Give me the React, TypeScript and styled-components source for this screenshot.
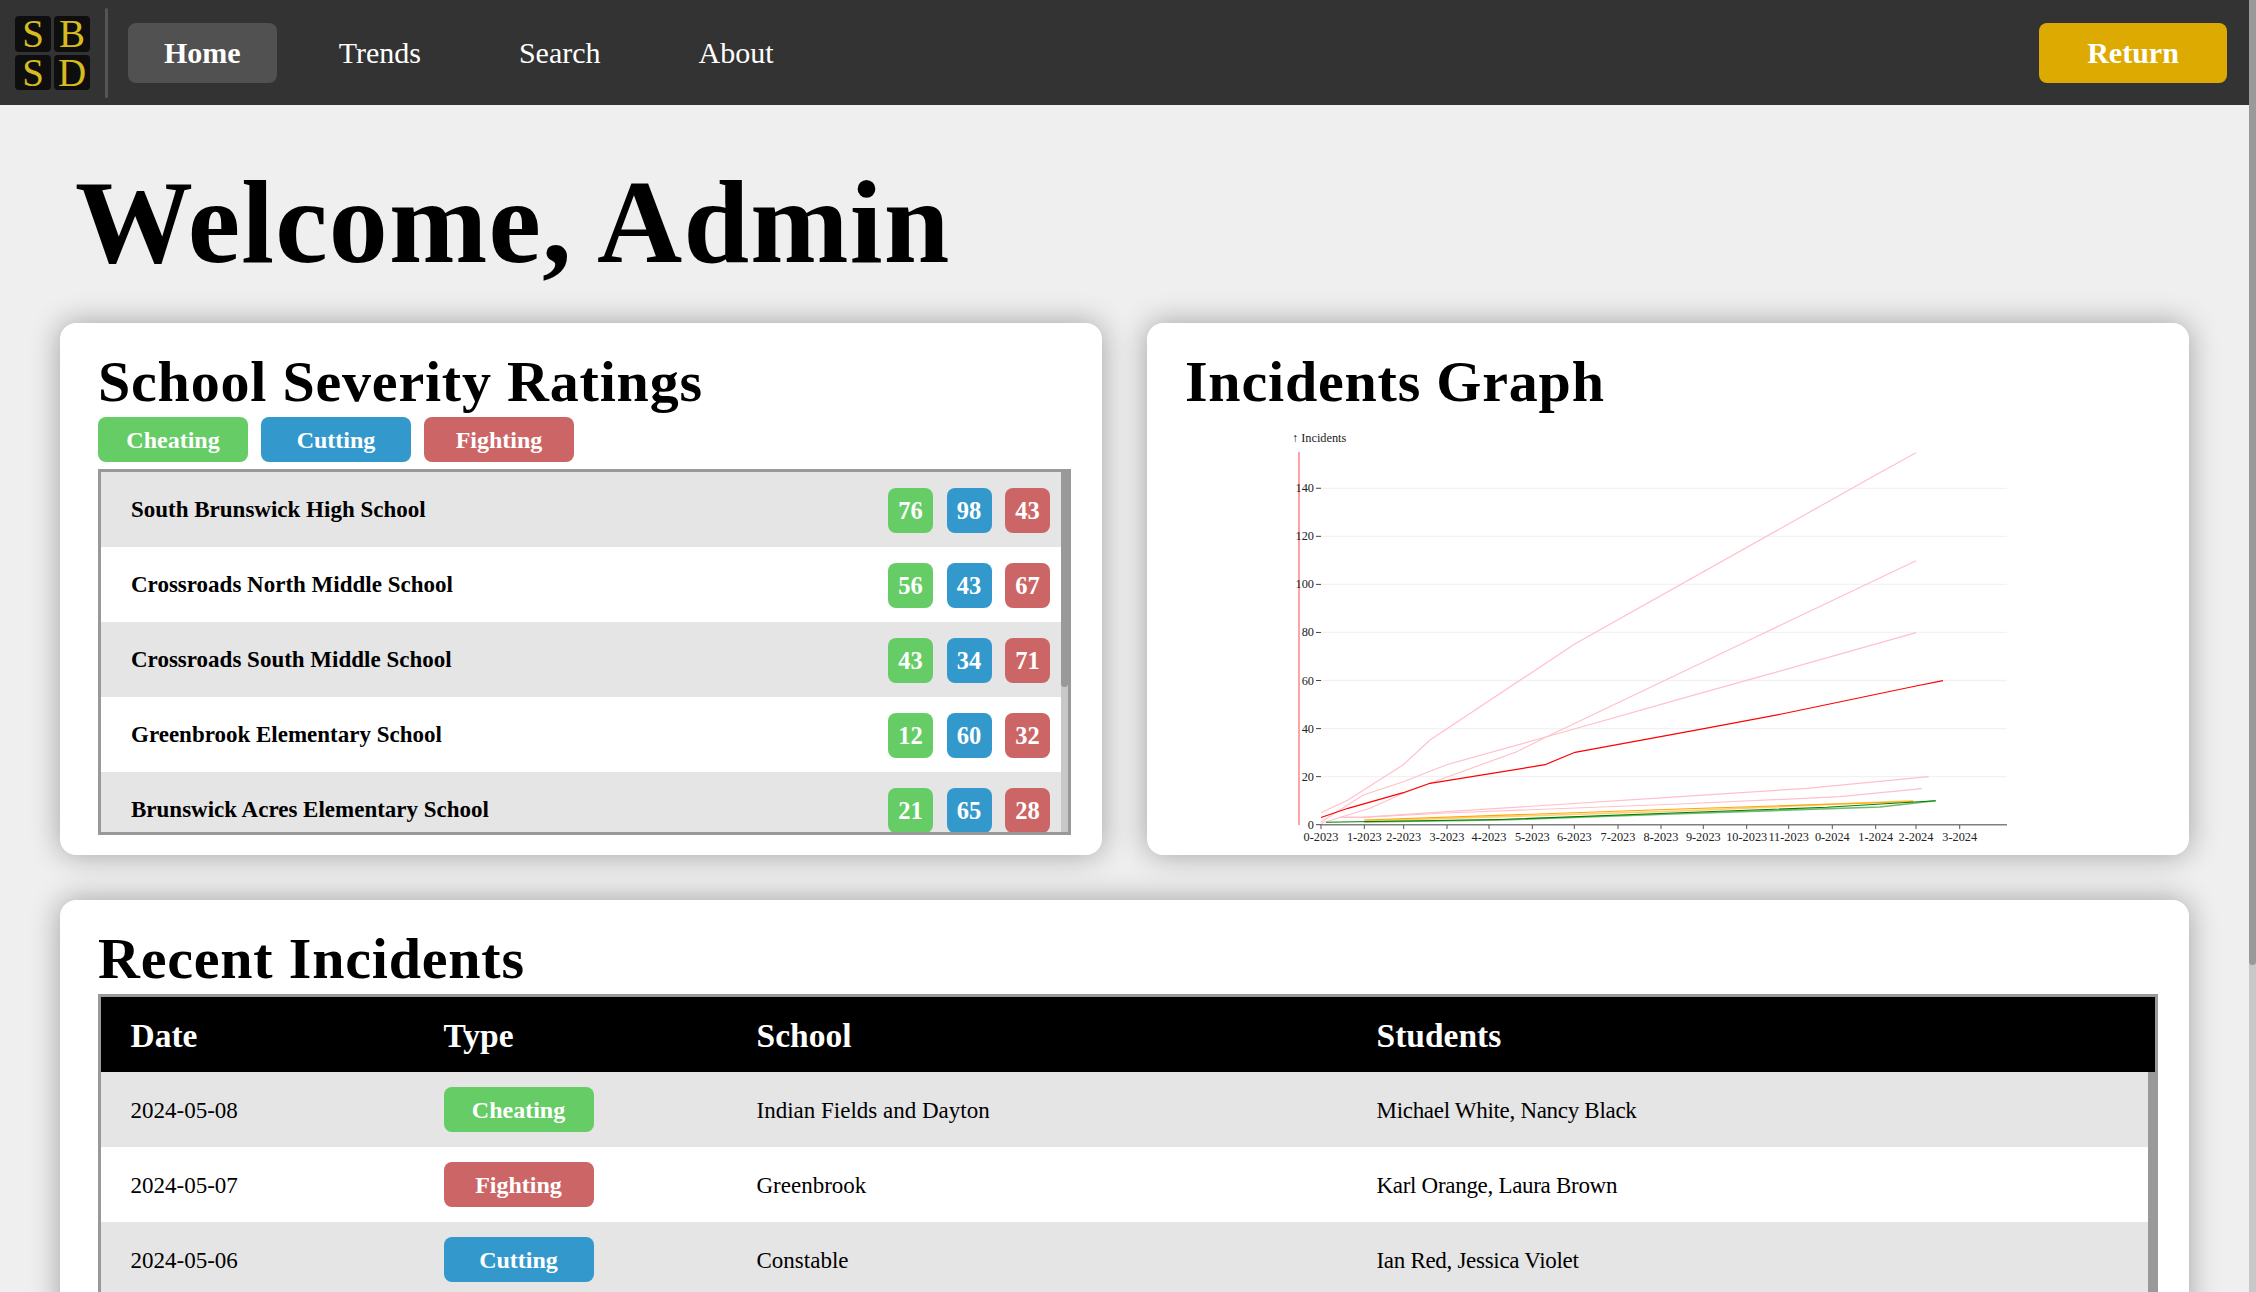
import React from 'react';
import styled, { createGlobalStyle } from 'styled-components';

type Kind = 'cheating' | 'cutting' | 'fighting';

const kindColors: Record<Kind, string> = {
  cheating: '#66cc66',
  cutting: '#3399cc',
  fighting: '#cc6666',
};

const GlobalStyle = createGlobalStyle`
  html {
    background: #efefef;
  }
  body {
    margin: 0;
    padding-right: 7px;
    background: #efefef;
    color: #000;
    font-family: "Liberation Serif", "Times New Roman", serif;
  }
`;

// the browser hides real scrollbars in the picture, so they are drawn
const PageRail = styled.div`
  position: fixed;
  top: 0;
  right: 0;
  bottom: 0;
  width: 7px;
  background: #c8c8c8;
`;

const Rail = styled.div`
  flex: none;
  width: 7px;
  background: #c8c8c8;
`;

const Thumb = styled.div<{ $height: number }>`
  height: ${(props) => props.$height}px;
  border-radius: 0 0 4px 4px;
  background: #999;
`;

const Header = styled.header`
  display: flex;
  align-items: center;
  height: 105px;
  padding: 0 22px 0 15px;
  background: #333;
`;

const Logo = styled.div`
  display: grid;
  grid-template-columns: 36px 36px;
  grid-template-rows: 36px 35px;
  gap: 3px;
`;

const LogoCell = styled.span`
  display: flex;
  align-items: center;
  justify-content: center;
  border-radius: 4px;
  background: #0e0e0e;
  color: #d6bc1f;
  font-size: 39px;
  line-height: 1;
`;

const Divider = styled.div`
  width: 3px;
  height: 90px;
  margin: 0 20px 0 15px;
  border-radius: 2px;
  background: #555;
`;

const Nav = styled.nav`
  display: flex;
  gap: 26px;
`;

const NavLink = styled.a<{ $active?: boolean }>`
  display: flex;
  align-items: center;
  height: 60px;
  padding: 0 36px;
  border-radius: 8px;
  background: ${(props) => (props.$active ? '#515151' : 'transparent')};
  color: #fff;
  font-size: 30px;
  font-weight: ${(props) => (props.$active ? 700 : 400)};
`;

const ReturnButton = styled.button`
  width: 188px;
  height: 60px;
  margin-left: auto;
  border: none;
  border-radius: 8px;
  background: #dcaa00;
  color: #fff;
  font-family: inherit;
  font-size: 30px;
  font-weight: 700;
`;

const Main = styled.main`
  padding: 0 60px 45px;
`;

const Title = styled.h1`
  margin: 59px 0 41px 15px;
  font-size: 118px;
  line-height: 118px;
  font-weight: 700;
  letter-spacing: 1.2px;
`;

const TopGrid = styled.div`
  display: grid;
  grid-template-columns: 1fr 1fr;
  gap: 45px;
  margin-bottom: 45px;
`;

const Card = styled.section`
  display: flex;
  flex-direction: column;
  padding: 30px 31px 20px 38px;
  border-radius: 16px;
  background: #fff;
  box-shadow: 0 0 30px rgba(0, 0, 0, 0.33);
`;

const CardTitle = styled.h2`
  margin: 0 0 6px;
  font-size: 58px;
  line-height: 58px;
  font-weight: 700;
  letter-spacing: 0.8px;
`;

const Legend = styled.div`
  display: flex;
  gap: 13px;
  margin-bottom: 7px;
`;

const Pill = styled.span<{ $kind: Kind }>`
  display: flex;
  align-items: center;
  justify-content: center;
  box-sizing: border-box;
  width: 150px;
  height: 45px;
  padding-top: 2px;
  border-radius: 8px;
  background: ${(props) => kindColors[props.$kind]};
  color: #fff;
  font-size: 24px;
  font-weight: 700;
`;

const Frame = styled.div`
  border: 3px solid #999;
`;

const ScrollArea = styled.div<{ $height: number }>`
  display: flex;
  height: ${(props) => props.$height}px;
`;

const Rows = styled.div`
  flex: 1;
  overflow: hidden;
`;

const SchoolRow = styled.div`
  display: flex;
  align-items: center;
  justify-content: space-between;
  height: 75px;
  padding: 0 11px 0 30px;
  font-size: 23px;
  font-weight: 700;
  &:nth-child(odd) {
    background: #e5e5e5;
  }
  &:nth-child(even) {
    background: #fff;
  }
`;

const Scores = styled.div`
  display: flex;
  gap: 13.5px;
  margin-top: 2px;
`;

const Score = styled.span<{ $kind: Kind }>`
  display: flex;
  align-items: center;
  justify-content: center;
  width: 45px;
  height: 45px;
  border-radius: 8px;
  background: ${(props) => kindColors[props.$kind]};
  color: #fff;
  font-size: 24.5px;
`;

const Chart = styled.svg`
  display: block;
  width: 766px;
  height: 418px;
  margin-left: 100px;
  overflow: visible;
  font-family: "Liberation Serif", serif;
`;

const TableColumns = styled.div`
  display: grid;
  grid-template-columns: 313px 313px 620px 1fr;
  align-items: center;
  height: 75px;
  padding-left: 29.5px;
`;

const TableHead = styled(TableColumns)`
  background: #000;
  color: #fff;
  font-size: 33.5px;
  font-weight: 700;
  line-height: 37px;
  padding-top: 1px;
  height: 74px;
`;

const IncidentRow = styled(TableColumns)`
  font-size: 23px;
  &:nth-child(odd) {
    background: #e5e5e5;
  }
  &:nth-child(even) {
    background: #fff;
  }
`;

const CellText = styled.span<{ $tight?: boolean }>`
  padding-top: 2px;
  letter-spacing: ${(props) => (props.$tight ? '-0.3px' : 'normal')};
`;

const schools = [
  { name: 'South Brunswick High School', scores: [76, 98, 43] },
  { name: 'Crossroads North Middle School', scores: [56, 43, 67] },
  { name: 'Crossroads South Middle School', scores: [43, 34, 71] },
  { name: 'Greenbrook Elementary School', scores: [12, 60, 32] },
  { name: 'Brunswick Acres Elementary School', scores: [21, 65, 28] },
  { name: 'Cambridge Elementary School', scores: [18, 22, 15] },
  { name: 'Constable Elementary School', scores: [30, 14, 26] },
  { name: 'Indian Fields Elementary School', scores: [9, 27, 19] },
];

const incidents: { date: string; type: Kind; school: string; students: string }[] = [
  { date: '2024-05-08', type: 'cheating', school: 'Indian Fields and Dayton', students: 'Michael White, Nancy Black' },
  { date: '2024-05-07', type: 'fighting', school: 'Greenbrook', students: 'Karl Orange, Laura Brown' },
  { date: '2024-05-06', type: 'cutting', school: 'Constable', students: 'Ian Red, Jessica Violet' },
  { date: '2024-05-05', type: 'cheating', school: 'Crossroads North', students: 'Grace Blue, Henry Green' },
  { date: '2024-05-04', type: 'fighting', school: 'Crossroads South', students: 'Emma Gray, Frank Pink' },
  { date: '2024-05-03', type: 'cutting', school: 'Brunswick Acres', students: 'Carol Gold, David Silver' },
  { date: '2024-05-02', type: 'cheating', school: 'South Brunswick', students: 'Alice Tan, Bob Teal' },
  { date: '2024-05-01', type: 'fighting', school: 'Cambridge', students: 'Owen Hart, Paula Reed' },
];

const labels: Record<Kind, string> = { cheating: 'Cheating', cutting: 'Cutting', fighting: 'Fighting' };
const kinds: Kind[] = ['cheating', 'cutting', 'fighting'];

const xTicks: [number, string][] = [
  [1321, '0-2023'], [1364.3, '1-2023'], [1403.7, '2-2023'], [1447, '3-2023'], [1489, '4-2023'],
  [1532.3, '5-2023'], [1574.3, '6-2023'], [1618, '7-2023'], [1661, '8-2023'], [1703.3, '9-2023'],
  [1746.7, '10-2023'], [1788.7, '11-2023'], [1832.3, '0-2024'], [1875.7, '1-2024'], [1916, '2-2024'], [1959.7, '3-2024'],
];
const yTicks = [0, 20, 40, 60, 80, 100, 120, 140];
const yScale = (value: number) => 824.7 - value * 2.403;

const pinkLines = [
  '1321,812.7 1348,800 1403.3,764.7 1430,740 1574.3,644.3 1875.7,475 1916,452.7',
  '1321,823.3 1370,808.3 1403.3,793.3 1430,783.3 1516.7,751.7 1546.7,736.7 1760,635 1916,560.7',
  '1321,822 1363.3,795 1403.3,781.7 1446.7,764.7 1553,735 1700,693.3 1760,676.7 1916,632.7',
  '1340,817.3 1361.7,817.3 1446.7,811.7 1680,796.7 1806.7,788.3 1928.7,776.7',
  '1340,817.3 1361.7,817.3 1446.7,813 1680,804 1840,796.7 1921.7,788.7',
];

const IncidentsChart: React.FC = () => (
  <Chart viewBox="1285 417 766 418">
    <line x1={1299} x2={1299} y1={452} y2={825} stroke="#ff9a9a" strokeWidth={1.8} />
    {yTicks.map((tick) => (
      <g key={tick}>
        {tick > 0 && <line x1={1321} x2={2007} y1={yScale(tick)} y2={yScale(tick)} stroke="#f2f2f2" strokeWidth={1.3} />}
        <line x1={1316} x2={1321} y1={yScale(tick)} y2={yScale(tick)} stroke="#444" />
        <text x={1314} y={yScale(tick) + 4} fontSize={12.3} textAnchor="end" fill="#222">{tick}</text>
      </g>
    ))}
    {pinkLines.map((points) => (
      <polyline key={points} points={points} fill="none" stroke="#ffc0cb" strokeWidth={1.2} />
    ))}
    <polyline points="1364.3,821 1680,811 1913.3,800.7" fill="none" stroke="#ffa500" strokeOpacity={0.55} strokeWidth={1.6} />
    <polyline points="1364.3,820 1680,809 1913.3,801.5" fill="none" stroke="#ffa500" strokeWidth={1.1} />
    <polyline points="1364.3,822 1500,820 1680,813.7 1880,807 1935.7,800.7" fill="none" stroke="#008000" strokeOpacity={0.55} strokeWidth={1.6} />
    <polyline points="1326,822.3 1500,819.5 1680,812.7 1826.7,807.3 1935.7,800.7" fill="none" stroke="#008000" strokeWidth={1.1} />
    <polyline
      points="1321,817.5 1348,808.3 1403.3,792.7 1430,783.3 1545,764.7 1575,752.3 1700,729.3 1781.7,714 1916,686 1943,680.7"
      fill="none"
      stroke="#ff0000"
      strokeWidth={1.2}
    />
    <line x1={1321} x2={2007} y1={824.7} y2={824.7} stroke="#808080" strokeWidth={1.4} />
    {xTicks.map(([x, label]) => (
      <g key={label}>
        <line x1={x} x2={x} y1={825} y2={829} stroke="#555" />
        <text x={x} y={841} fontSize={12.3} textAnchor="middle" fill="#222">{label}</text>
      </g>
    ))}
    <text x={1292} y={442} fontSize={12.3} fill="#222">↑ Incidents</text>
  </Chart>
);

const App: React.FC = () => (
  <>
    <GlobalStyle />
    <PageRail>
      <Thumb $height={965} />
    </PageRail>
    <Header>
      <Logo>
        {['S', 'B', 'S', 'D'].map((letter, index) => (
          <LogoCell key={index}>{letter}</LogoCell>
        ))}
      </Logo>
      <Divider />
      <Nav>
        <NavLink $active>Home</NavLink>
        <NavLink>Trends</NavLink>
        <NavLink>Search</NavLink>
        <NavLink>About</NavLink>
      </Nav>
      <ReturnButton>Return</ReturnButton>
    </Header>
    <Main>
      <Title>Welcome, Admin</Title>
      <TopGrid>
        <Card>
          <CardTitle>School Severity Ratings</CardTitle>
          <Legend>
            {kinds.map((kind) => (
              <Pill key={kind} $kind={kind}>{labels[kind]}</Pill>
            ))}
          </Legend>
          <Frame>
            <ScrollArea $height={360}>
              <Rows>
                {schools.map((school) => (
                  <SchoolRow key={school.name}>
                    {school.name}
                    <Scores>
                      {school.scores.map((score, index) => (
                        <Score key={index} $kind={kinds[index]}>{score}</Score>
                      ))}
                    </Scores>
                  </SchoolRow>
                ))}
              </Rows>
              <Rail>
                <Thumb $height={215} />
              </Rail>
            </ScrollArea>
          </Frame>
        </Card>
        <Card>
          <CardTitle>Incidents Graph</CardTitle>
          <IncidentsChart />
        </Card>
      </TopGrid>
      <Card>
        <CardTitle>Recent Incidents</CardTitle>
        <Frame>
          <TableHead>
            <span>Date</span>
            <span>Type</span>
            <span>School</span>
            <span>Students</span>
          </TableHead>
          <ScrollArea $height={600}>
            <Rows>
              {incidents.map((incident) => (
                <IncidentRow key={incident.date}>
                  <CellText>{incident.date}</CellText>
                  <Pill $kind={incident.type}>{labels[incident.type]}</Pill>
                  <CellText>{incident.school}</CellText>
                  <CellText $tight>{incident.students}</CellText>
                </IncidentRow>
              ))}
            </Rows>
            <Rail>
              <Thumb $height={480} />
            </Rail>
          </ScrollArea>
        </Frame>
      </Card>
    </Main>
  </>
);

export default App;
